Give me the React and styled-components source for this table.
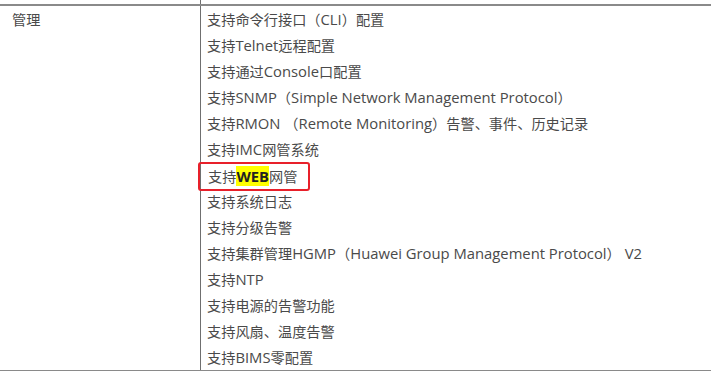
import styled, { createGlobalStyle } from "styled-components";

const GlobalStyle = createGlobalStyle`
    html, body {
        margin: 0;
        padding: 0;
        background: #fff;
    }
    body {
        font-family: "Noto Sans CJK SC", sans-serif;
        color: #4a4a4a;
    }
`;

const features = [
    "支持命令行接口（CLI）配置",
    "支持Telnet远程配置",
    "支持通过Console口配置",
    "支持SNMP（Simple Network Management Protocol）",
    "支持RMON （Remote Monitoring）告警、事件、历史记录",
    "支持IMC网管系统",
    "WEB",
    "支持系统日志",
    "支持分级告警",
    "支持集群管理HGMP（Huawei Group Management Protocol） V2",
    "支持NTP",
    "支持电源的告警功能",
    "支持风扇、温度告警",
    "支持BIMS零配置",
];

// latin runs get their own font, the rest stays in the CJK face
const MixedText = ({ text }) =>
    text.split(/([\x20-\x7e]+)/).map((part, i) =>
        i % 2 ? <Latin key={i}>{part}</Latin> : part
    );

const App = () => {
    return (
        <>
            <GlobalStyle />
            <Table>
                <Row>
                    <LabelCell />
                    <ListCell cut />
                </Row>
                <Row bordered>
                    <LabelCell>管理</LabelCell>
                    <ListCell>
                        {features.map(f =>
                            f === "WEB" ? (
                                <Line key={f}>
                                    <Marked>
                                        支持<Highlight>WEB</Highlight>网管
                                    </Marked>
                                </Line>
                            ) : (
                                <Line key={f}>
                                    <MixedText text={f} />
                                </Line>
                            )
                        )}
                    </ListCell>
                </Row>
            </Table>
        </>
    );
};

const Table = styled.div`
    width: 711px;
    display: flex;
    flex-direction: column;
    font-size: 14.2px;
    border-bottom: 1px solid #8a8a8a;
`;

const Row = styled.div`
    display: flex;
    border-top: ${props => (props.bordered ? "2px solid #8a8a8a" : "none")};
`;

const LabelCell = styled.div`
    width: 201px;
    box-sizing: border-box;
    padding-left: 12px;
    line-height: 26px;
    border-right: 1px solid #6f6f6f;
`;

const ListCell = styled.div`
    flex: 1;
    display: flex;
    flex-direction: column;
    padding-left: 6px;
    height: ${props => (props.cut ? "4px" : "auto")};
`;

const Line = styled.div`
    height: 26px;
    line-height: 26px;
    white-space: nowrap;
`;

const Latin = styled.span`
    font-family: "Open Sans", sans-serif;
    font-size: 14.8px;
`;

/* red frame drawn round the web management entry */
const Marked = styled.span`
    display: inline-block;
    margin-left: -9px;
    padding: 0 11px 0 8px;
    height: 25px;
    border: 2px solid #e8202a;
    border-radius: 3px;
    line-height: 25px;
`;

const Highlight = styled.b`
    font-family: "Open Sans", sans-serif;
    font-size: 14.8px;
    background: #ffff00;
    color: #222;
`;

export default App;
